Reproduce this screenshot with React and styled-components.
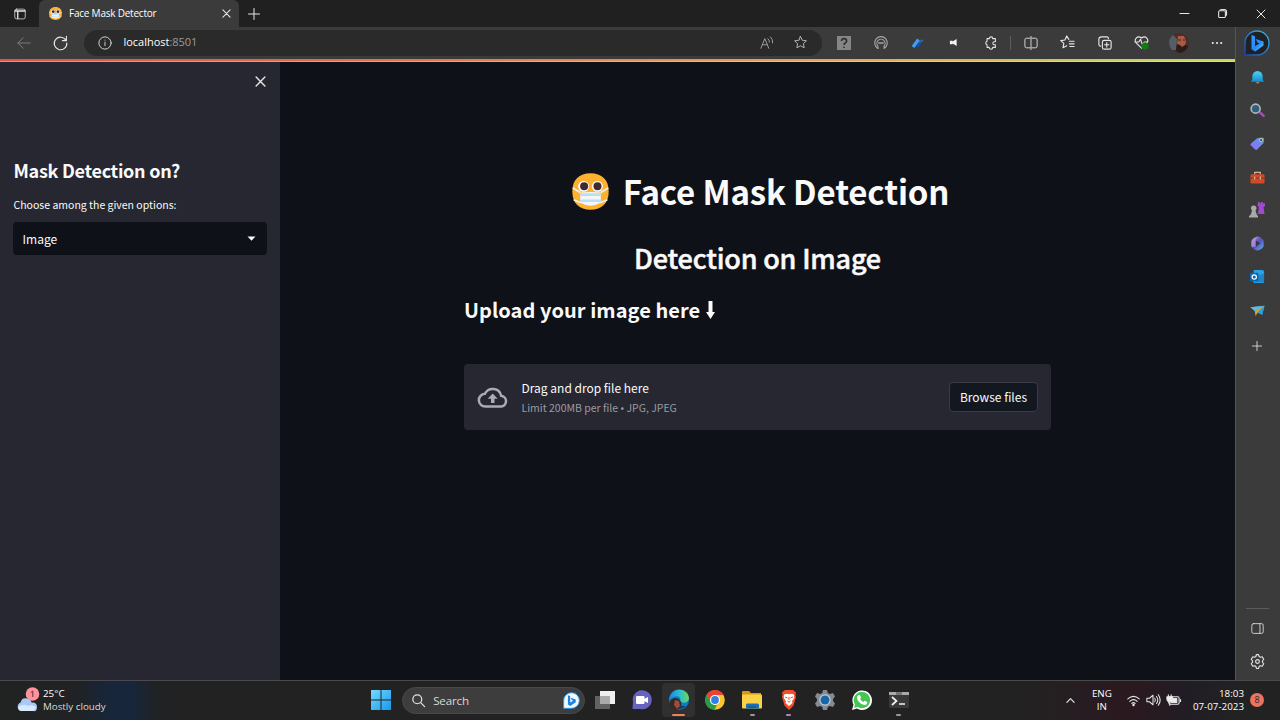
import React from "react";
import styled, { createGlobalStyle } from "styled-components";

const Global = createGlobalStyle`
  * { box-sizing: border-box; }
  html, body { margin: 0; padding: 0; background: #0e1117; }
  svg { display: block; flex: none; overflow: visible; }
`;

const ui = `"Open Sans", "Noto Sans", sans-serif`;
const source = `"Noto Sans CJK JP", "Noto Sans", sans-serif`;

const Screen = styled.div`
  width: 1280px; height: 720px; overflow: hidden;
  display: flex; flex-direction: column;
  font-family: ${ui}; color: #fff;
`;
const TitleBar = styled.header`
  height: 27px; flex: none; background: #202020;
  display: flex; align-items: stretch;
`;
const TabActions = styled.div`
  width: 39px; display: flex; align-items: center; justify-content: center;
`;
const Tab = styled.div`
  width: 200px; background: #3b3b3b; border-radius: 6px 6px 0 0;
  display: flex; align-items: center; padding: 0 8px 0 10px;
`;
const TabTitle = styled.span`
  flex: 1; margin-left: 7px; font-size: 10px; line-height: 14px; white-space: nowrap;
  letter-spacing: -0.22px; padding-bottom: 1px;
`;
const NewTab = styled.div`
  width: 30px; display: flex; align-items: center; justify-content: center;
`;
const WindowButtons = styled.div`
  margin-left: auto; display: flex;
`;
const WindowButton = styled.div`
  width: 38.4px; display: flex; align-items: center; justify-content: center;
`;
const Browser = styled.div`
  flex: 1; min-height: 0; display: flex; background: #3b3b3b;
`;
const Pane = styled.div`
  width: 1235px; flex: none; display: flex; flex-direction: column;
`;
const Toolbar = styled.div`
  height: 32px; flex: none; display: flex; align-items: center; padding-bottom: 1px;
`;
const NavButton = styled.div`
  width: 37px; flex: none; display: flex; justify-content: center; align-items: center;
  &:first-child { margin-left: 5px; }
`;
const AddressBar = styled.div`
  width: 738px; flex: none; height: 26px; border-radius: 13px; background: #2a2a2a;
  margin-left: 4.5px; padding-left: 14px; display: flex; align-items: center;
`;
const Url = styled.div`
  flex: 1; margin-left: 12px; font-size: 11px; line-height: 16px; letter-spacing: -0.02px; padding-bottom: 1px;
  span { color: #9b9b9b; }
`;
const BarSlot = styled.div`
  width: ${p => p.$w || 36.7}px; display: flex; justify-content: center; align-items: center; flex: none;
`;
const Extensions = styled.div`
  display: flex; align-items: center; margin-left: 4px;
`;
const Separator = styled.div`
  width: 1px; height: 14px; background: #5c5c5c; margin: 0 2px 0 1px;
`;
const ProgressLine = styled.div`
  height: 3px; flex: none;
  background: linear-gradient(90deg, #dc544c, #e0704f 30%, #e0a35c 65%, #d9b45c 78%, #c8c966 90%, #c9d65c);
  border-bottom: 1px solid rgba(255, 255, 200, 0.35);
`;
const AppArea = styled.div`
  flex: 1; display: flex; background: #0e1117; font-family: ${source}; color: #fafafa;
`;
const AppSidebar = styled.aside`
  width: 280px; background: #262730; padding: 0 13px;
`;
const CloseRow = styled.div`
  height: 38px; display: flex; justify-content: flex-end; align-items: center; padding-right: 1px;
`;
const SidebarTitle = styled.h2`
  margin: 57px 0 0 0.5px; font-size: 18px; line-height: 26px; font-weight: 700; white-space: nowrap;
  letter-spacing: -0.28px;
`;
const FieldLabel = styled.label`
  display: block; margin: 13px 0 0 0.5px; font-size: 10.5px; line-height: 18px; white-space: nowrap;
`;
const Select = styled.div`
  margin-top: 8px; height: 33px; border-radius: 4px; background: #0e1117;
  display: flex; align-items: center; justify-content: space-between; padding: 0 11px 0 9.5px;
  font-size: 12px; line-height: 18px;
`;
const Main = styled.main`
  flex: 1; display: flex; justify-content: center;
`;
const Block = styled.section`
  width: 587px; padding-top: 101px;
`;
const PageTitle = styled.h1`
  margin: 0; height: 56px; display: flex; justify-content: center; align-items: center;
  gap: 14px; padding-left: 6px; font-size: 33px; line-height: 44px; font-weight: 700; white-space: nowrap;
  letter-spacing: -0.14px;
`;
const PageSubtitle = styled.h2`
  margin: 17px 0 0; text-align: center; font-size: 27px; line-height: 44px;
  font-weight: 500; white-space: nowrap; letter-spacing: -0.19px; -webkit-text-stroke: 0.5px #fafafa;
`;
const UploadTitle = styled.h3`
  margin: 15px 0 0; font-size: 20px; line-height: 30px; font-weight: 700; white-space: nowrap;
  display: flex; align-items: center; gap: 6px; letter-spacing: 0.06px;
`;
const Dropzone = styled.div`
  margin-top: 39px; height: 66px; border-radius: 4px; background: #262730;
  display: flex; align-items: center; padding: 0 13px;
`;
const DropText = styled.div`
  flex: 1; margin-left: 13.5px; font-size: 12px; line-height: 21px; white-space: nowrap;
`;
const DropLimit = styled.div`
  font-size: 10.5px; line-height: 20px; color: #9a9ba2;
`;
const BrowseButton = styled.button`
  width: 89px; height: 30px; padding: 0; border: 1px solid #3a3b43; border-radius: 4px;
  background: #131720; color: #fafafa; font: 12px/18px ${source}; white-space: nowrap;
`;
const EdgeRail = styled.nav`
  width: 45px; border-left: 1px solid #555; background: #3b3b3b; padding: 0 2px 2px 0;
  display: flex; flex-direction: column; align-items: center;
`;
const RailSlot = styled.div`
  height: 33.3px; flex: none; display: flex; align-items: center; justify-content: center;
  &:first-child { height: 33.5px; padding-bottom: 2px; }
`;
const RailAdd = styled(RailSlot)`
  margin-top: 2.5px;
`;
const RailDivider = styled.div`
  width: 23px; height: 1px; background: #5c5c5c; margin: auto 0 2px;
`;
const Taskbar = styled.footer`
  height: 40px; flex: none; border-top: 1px solid #4a4a4c; display: flex; align-items: center;
  padding-bottom: 1px;
  background: linear-gradient(90deg, #222 0, #202224 75px, #17263a 110px, #17263a 132px, #202224 155px, #222 180px,
    #222 1020px, #281b21 1100px, #2b191e 1125px, #211d25 1190px, #222 1240px);
`;
const Weather = styled.div`
  width: 363px; flex: none; padding-left: 16px; display: flex; align-items: center; gap: 5px;
`;
const Stack = styled.div`
  font-size: 9.8px; line-height: 13.4px; white-space: nowrap;
  text-align: ${p => p.$align || "left"};
  div + div { color: ${p => p.$second || "#fff"}; }
`;
const Language = styled(Stack)`
  margin-left: 17px;
`;
const TaskSlot = styled.div`
  width: 36.65px; height: 36px; flex: none; display: flex; align-items: center; justify-content: center;
  position: relative;
`;
const ActiveTile = styled.div`
  width: 33px; height: 34px; border-radius: 4px; background: #303030;
  display: flex; align-items: center; justify-content: center;
`;
const Running = styled.i`
  position: absolute; bottom: 2px; height: 2.5px; border-radius: 2px;
  width: ${p => p.$w || 5}px; background: ${p => p.$color || "#999"};
`;
const SearchBox = styled.div`
  width: 183px; flex: none; height: 27px; border-radius: 14px; background: #3d3d3d; border: 1px solid #484848;
  margin: 0 2px 0 2.5px; display: flex; align-items: center; padding: 0 4px 0 9px;
  font-size: 11.6px; color: #d8d8d8;
  span { flex: 1; margin-left: 8px; letter-spacing: -0.15px; }
`;
const Tray = styled.div`
  margin-left: auto; display: flex; align-items: center; padding-right: 16px;
`;
const TrayIcons = styled.div`
  display: flex; align-items: center; gap: 6px; margin: 0 12px 0 15px;
`;
const Notification = styled.div`
  width: 14px; height: 14px; margin-left: 6px; border-radius: 50%; background: #ed7361;
  color: #37201d; font-size: 9px; line-height: 14px; text-align: center;
`;

const Line = ({ w = 16, h, vb = "0 0 16 16", c = "#e6e6e6", sw = 1, children }) => (
  <svg width={w} height={h || w} viewBox={vb} fill="none" stroke={c} strokeWidth={sw} strokeLinecap="round" strokeLinejoin="round">{children}</svg>
);
const Cross = ({ size, sw = 1 }) => <Line w={size} vb="0 0 10 10" sw={sw}><path d="M1 1 9 9M9 1 1 9" /></Line>;
const Plus = ({ size }) => <Line w={size} vb="0 0 12 12"><path d="M6 .5v11M.5 6h11" /></Line>;

const MaskFace = ({ size }) => (
  <svg width={size} height={size} viewBox="0 0 36 36">
    <path d="M18 .3C29 .3 35.7 6.500 35.7 18S29 35.700 18 35.700 .3 29.500 .3 18 7 .3 18 .3Z" fill="#ffb02e" />
    <path d="M.8 14.500 8 19M35.200 14.500 28 19M1.600 26l7 3M34.400 26l-7 3" stroke="#edf2f8" strokeWidth="1.700" />
    <circle cx="11.3" cy="13" r="5.3" fill="#fff" /><circle cx="24.7" cy="13" r="5.3" fill="#fff" />
    <circle cx="11.8" cy="13" r="3.9" fill="#402a32" /><circle cx="24.8" cy="13" r="3.9" fill="#402a32" />
    <path d="M8 19q10-.8 20 0v10q-10 5.500-20 0Z" fill="#f3f7fc" />
    <path d="M8 21h20M8 27h20" stroke="#b7dff7" strokeWidth="2.600" />
  </svg>
);
const BingMark = () => <path d="m7.500 5 3.500 1.300v9.700l4.500-2.500-2.200-1.100-1.400-3.500 7.600 2.700v4L11.200 21.500 7.500 19.300Z" />;
const BingButton = () => (
  <svg width="26" height="26" viewBox="0 0 26 26">
    <defs>
      <linearGradient id="bing-ring" x1="0" y1="1" x2="1" y2="0"><stop stopColor="#1745bd" /><stop offset="1" stopColor="#38b9df" /></linearGradient>
      <linearGradient id="bing-b" x1="0" y1="0" x2="1" y2="1"><stop stopColor="#3996ff" /><stop offset=".55" stopColor="#2587fb" /><stop offset="1" stopColor="#61dcef" /></linearGradient>
    </defs>
    <path d="M1 25V13A12 12 0 1 1 13 25Z" fill="#202124" stroke="url(#bing-ring)" strokeWidth="1.3" />
    <g fill="url(#bing-b)"><BingMark /></g>
  </svg>
);
const Star = () => <path d="m8 1.6 1.9 4 4.4.6-3.2 3 .8 4.4L8 11.5l-3.9 2.1.8-4.4-3.2-3 4.4-.6Z" />;

const AddressIcons = () => (
  <>
    <BarSlot $w={33}><Line w={14} c="#aaa"><path d="M1 14 5.5 3 10 14M2.8 10h5.4M9 3q2 1.5 1.8 4M12 1q3.2 3 2.5 7" /></Line></BarSlot>
    <BarSlot $w={33}><Line w={15} c="#bbb"><Star /></Line></BarSlot>
    <BarSlot $w={5} />
  </>
);

const ToolIcons = () => (
  <Extensions>
    <BarSlot><svg width="14" height="14" viewBox="0 0 14 14"><path fill="#858585" d="M0 0h14v14H0z" /><path d="M4.5 5Q4.5 2.700 7 2.700T9.600 5Q9.600 6.200 8.300 7T7 9.100M7 10.700v1.200" fill="none" stroke="#303030" strokeWidth="1.7" /></svg></BarSlot>
    <BarSlot><Line w={14} c="#a8a8a8" sw={1.2}><path d="M4.500 14.200A7.200 7.200 0 1 1 11.500 14.200V12" /><path d="M4.500 14.200V11.500A4.700 4.700 0 1 1 11.500 11.500" /><path d="M5.500 8h1.200M7.600 8h1M9.500 8h1" strokeWidth="1.600" /></Line></BarSlot>
    <BarSlot><svg width="14" height="14" viewBox="0 0 14 14"><path d="M3 11 8.500 3.500" stroke="#3ca0f4" strokeWidth="3.400" /><path d="m7 11 3-4" stroke="#174cae" strokeWidth="2.600" /><path d="m9 6.500 4-2.500" stroke="#2468cc" strokeWidth="2" /></svg></BarSlot>
    <BarSlot><svg width="9" height="9" viewBox="0 0 10 10"><path d="M1 3h3v4H1zM4 3.800 8.500 1v8L4 6.200Z" fill="#f2f2f2" /></svg></BarSlot>
    <BarSlot><Line w={14} sw={1.2}><path d="M3.500 3H6a2 2 0 0 1 4 0h3v3.500h-1.200a1.700 1.700 0 0 0 0 3.400H13V13h-3a2 2 0 0 1-4 0H3.500v-3a2.100 2.100 0 0 1 0-4V3Z" /></Line></BarSlot>
    <Separator />
    <BarSlot><Line w={14}><path d="M7 2.500H3q-2 0-2 2v7q0 2 2 2h4M9 2.500h4q2 0 2 2v7q0 2-2 2H9M8 .5v15" /></Line></BarSlot>
    <BarSlot><Line w={15} sw={1.2}><path d="M9.4 4.7 7.2 1 5.2 5.3.8 6l3.3 3-.9 4.5 4-2.1M10 6.7h5M10 9.5h5M10.5 12.3H15" /></Line></BarSlot>
    <BarSlot><Line w={14} sw={1.3}><rect x="5" y="5" width="10" height="10" rx="2" /><path d="M3 11.5A2 2 0 0 1 1 9.5V4a3 3 0 0 1 3-3h6a2 2 0 0 1 2 2M10 7.5v5M7.5 10h5" /></Line></BarSlot>
    <BarSlot><Line w={15} sw={1.2}><path d="M8 14 2.5 8.6C-.7 5 3.5-.3 8 3.2c4.5-3.5 8.7 1.8 5.5 5.4M1 7.5h4l2-3 2 6 2-3h3" /><circle cx="11.8" cy="11.8" r="3.8" fill="#107c10" stroke="none" /></Line></BarSlot>
    <BarSlot $w={39}><svg width="20" height="20" viewBox="0 0 20 20"><circle cx="10" cy="10" r="10" fill="#4c2d25" /><path d="M3 17A10 10 0 0 1 4 2l4 4-1 11Z" fill="#555d66" /><path d="m9 3 6 0 2 5-1 5-4 3-4-5Z" fill="#a85b42" /><path d="m8 11 3 1 2 2 3-2 3 1q-2 6-8 7l-4-2Z" fill="#2b1b1a" /><path d="M9 7h3M14 7h2" stroke="#3a211d" strokeWidth="1.200" /></svg></BarSlot>
    <BarSlot $w={36}><svg width="12" height="4" viewBox="0 0 12 4" fill="#e9e9e9"><circle cx="1.800" cy="2" r="1.1" /><circle cx="6" cy="2" r="1.1" /><circle cx="10.200" cy="2" r="1.1" /></svg></BarSlot>
  </Extensions>
);

const Full = ({ children, size = 15 }) => <svg width={size} height={size} viewBox="0 0 16 16">{children}</svg>;
const Defs = () => (
  <defs>
    <linearGradient id="bell" x1="0" y1="0" x2="0" y2="1"><stop stopColor="#4fd3ef" /><stop offset="1" stopColor="#168bd5" /></linearGradient>
    <linearGradient id="tag" x1="0" y1="1" x2="1" y2="0"><stop stopColor="#966bff" /><stop offset="1" stopColor="#539de9" /></linearGradient>
    <linearGradient id="m365" x1="0" y1="0" x2="1" y2="1"><stop stopColor="#bd87df" /><stop offset=".5" stopColor="#5451b9" /><stop offset="1" stopColor="#63b7f5" /></linearGradient>
  </defs>
);
const railIcons = [
  <Full><Defs /><path d="M2.500 6.500a5.500 5.500 0 0 1 11 0V10l1.500 2.500H1L2.500 10Z" fill="url(#bell)" /><path d="M6 13h4q-1 3-4 0Z" fill="#c8a16d" /></Full>,
  <Full><path d="m11 10.500 3.500 3" stroke="#a948bd" strokeWidth="2.800" strokeLinecap="round" /><circle cx="6" cy="6" r="4.800" fill="#315e78" stroke="#b3b8bd" strokeWidth="1.700" /></Full>,
  <Full><path d="m1 8 7-6 5-.5 2 1-.5 5-7 7Q6 16 3 12L.5 9.500Z" fill="url(#tag)" /><circle cx="11.800" cy="4.300" r="1.600" fill="#25344a" stroke="#e3d379" /></Full>,
  <Full><path d="M5 5V2.500h6V5" fill="none" stroke="#cfb8aa" strokeWidth="1.200" /><rect x=".5" y="4.500" width="15" height="10" rx="1.500" fill="#ce4b26" /><path d="M.5 8.600h15" stroke="#842f1c" /><path d="M5 7v3M11 7v3" stroke="#ddd" /></Full>,
  <Full size={16}><path d="M9 0h1.800v1.300H12V0h1.700v1.300H16V4l-1.500 1 1 7H9l1-7-1.500-1Z" fill="#a249d2" /><path d="M5 3.500a2.600 2.600 0 0 1 2 4.200L6.500 9 8 13l1 1v1.500H0V14l1.500-1 1.500-4-.5-1.300A2.600 2.600 0 0 1 5 3.500Z" fill="#a8aaa7" /></Full>,
  <Full><path d="M8 .5q2 0 4 1.500 3 2 2.500 5v4q-1 2-3 3.200T8 15.500 4.500 14 1.500 11.500v-6Q2 3 4.500 2T8 .5Z" fill="url(#m365)" /><path d="m6 4.500 5 3.500-5 3.500Z" fill="#343745" /><path d="M1.500 5.500Q4 1 9 .6 6 2 6 6v5.500l-4.500 0Z" fill="#bc96dd" opacity=".7" /></Full>,
  <Full><path d="M4 1h9q2 0 2 2v11q0 1-2 1H5Q3.500 15 3.500 13Z" fill="#27a4e4" /><path d="M4 8 15 5v9H5Z" fill="#2284c6" /><rect y="4" width="9" height="9" rx="1" fill="#0867b3" /><circle cx="4.500" cy="8.500" r="2.300" fill="none" stroke="#fff" strokeWidth="1.300" /></Full>,
  <Full><path d="M.5 4.500 15.500 3 13 12.500 7.500 10Z" fill="#36a4df" /><path d="M.5 4.500 15.500 3 5 8.500Z" fill="#65b9dc" /><path d="m5 8.500 1 5.500 2-3.500L15.500 3Z" fill="#d5a231" /><path d="m8 10 7.500-7L13 12.500Z" fill="#319cd7" /></Full>,
];

const Gear = () => (
  <Line w={15} sw={1.2}><path d="m6.600 1 .3-.3h2.200l.6 2 1.300.7 2-.5 1.700 2.700-1.400 1.600v1.600l1.400 1.600-1.700 2.700-2-.5-1.300.8-.6 2H6.900l-.6-2-1.300-.8-2 .5-1.700-2.700 1.400-1.600V7.200L1.300 5.600 3 2.900l2 .5 1.300-.7Z" /><circle cx="8" cy="8" r="2" /></Line>
);

const Icon20 = ({ children }) => <svg width="20" height="20" viewBox="0 0 20 20">{children}</svg>;
const TaskIcons = () => (
  <>
    <TaskSlot><Icon20><path d="M5 1h15v13H5Z" fill="#efefef" /><path d="M0 6h15v13H0Z" fill="#6d6d6d" opacity=".85" /><path d="M5 6h10v8H5Z" fill="#aaa" /></Icon20></TaskSlot>
    <TaskSlot><Icon20><path d="M.5 19 1 12a9.500 9.500 0 1 1 7 7Z" fill="#6763be" /><rect x="4" y="6" width="8.500" height="8" rx="1.200" fill="#fff" /><path d="m12 9 4-2v6l-4-2Z" fill="#fff" /></Icon20></TaskSlot>
    <TaskSlot><ActiveTile><Icon20>
      <defs><linearGradient id="edge"><stop stopColor="#1d85dc" /><stop offset=".5" stopColor="#29bad7" /><stop offset="1" stopColor="#6bd953" /></linearGradient></defs>
      <circle cx="10" cy="10" r="10" fill="#087ec7" /><path d="M0 10C1-4 19-3 20 8c0 5-7 6-9 3 2-5-5-7-11-1Z" fill="url(#edge)" /><path d="M8 9q-1 8 9 7-6 6-12 1Z" fill="#123f7a" /><circle cx="6.300" cy="14" r="6" fill="#382723" /><path d="m6 10 4 1 1 5-3 3-3-4Z" fill="#98503d" />
    </Icon20></ActiveTile><Running $w={13} $color="#ed815d" /></TaskSlot>
    <TaskSlot><Icon20><circle cx="10" cy="10" r="9.800" fill="#fac62b" /><path d="M1.500 5A9.800 9.800 0 0 1 18.600 5H10a5 5 0 0 0-4.400 7.400Z" fill="#e94335" /><path d="M1.500 5 6 12.500A5 5 0 0 0 12 14.500L9.500 19.800A9.800 9.800 0 0 1 1.500 5Z" fill="#269c4b" /><circle cx="10" cy="10" r="5" fill="#fff" /><circle cx="10" cy="10" r="3.900" fill="#317ee8" /></Icon20></TaskSlot>
    <TaskSlot><Icon20><path d="M0 2q0-1 1-1h6l2 2h10v4H0Z" fill="#d99715" /><rect y="4.500" width="20" height="14" rx="1" fill="#fbd246" /><path d="M4 18.500V15q0-1.500 1.500-1.500h10q1.500 0 1.500 1.500v3.500Z" fill="#1670b8" /><path d="M7 17h7" stroke="#0a4f87" /></Icon20><Running /></TaskSlot>
    <TaskSlot><Icon20><path d="m6 0h8l3 2.500-.5 2.500.5 2-2.500 8.500L10 20l-4.500-4.500L3 7l.5-2L3 2.500Z" fill="#f44d27" /><path d="m5 4.500 3-.8 2 .6 2-.6 3 .8.300 3-1.300 2.500-1 1 .5 2L10 16l-3.500-3 .5-2-1-1L4.700 7.500Z" fill="#fff" /><path d="m6 7 2.500 1M14 7l-2.500 1M10 7v3M8.500 11l1.500 1.200 1.500-1.200" fill="none" stroke="#f44d27" /></Icon20><Running $color="#b189b4" /></TaskSlot>
    <TaskSlot><Icon20><path d="M8 0h4l.8 3 2 .9L18 3l2 3.500-2 2.500v2l2 2.500-2 3.500-3.200-.9-2 .9-.8 3H8l-.8-3-2-.9L2 17l-2-3.500L2 11V9L0 6.500 2 3l3.200.900 2-.900Z" fill="#858b93" /><circle cx="10" cy="10" r="5.700" fill="#c8d0d9" /><circle cx="10" cy="10" r="4.500" fill="#1767a8" /></Icon20></TaskSlot>
    <TaskSlot><Icon20><path d="m0 20 1.500-5.200A9.800 9.800 0 1 1 5 18.600Z" fill="#fff" /><path d="m2 18 1-3.500A8.200 8.200 0 1 1 5.500 17Z" fill="#44c655" /><path d="m6.200 5.300 1.700-.3 1.200 2.700-1 1.300q1 2.200 3.300 3l1.200-1.300 2.700 1.200q.2 2.800-2.800 3.200Q5.600 13.200 5 7.800 5 6.200 6.200 5.300Z" fill="#fff" /></Icon20></TaskSlot>
    <TaskSlot><Icon20><rect y="2" width="20" height="16" rx="1" fill="#393939" /><path d="M0 2h20v3H0Z" fill="#aaa" /><path d="M7 2h6v3H7Z" fill="#777" /><path d="m3 7 4.500 4L3 15M10 14h6" fill="none" stroke="#f2f2f2" strokeWidth="1.700" /></Icon20><Running /></TaskSlot>
  </>
);

export default function App() {
  return (
    <Screen>
      <Global />
      <TitleBar>
        <TabActions><Line w={12}><rect x="1" y="1.500" width="14" height="13" rx="2.500" /><path d="M1.500 4h13M5 4v10" strokeWidth="1.800" /></Line></TabActions>
        <Tab><MaskFace size={13} /><TabTitle>Face Mask Detector</TabTitle><Cross size={9} sw={1.200} /></Tab>
        <NewTab><Plus size={12} /></NewTab>
        <WindowButtons>
          <WindowButton><Line w={9} vb="0 0 9 9"><path d="M0 4.500h9" /></Line></WindowButton>
          <WindowButton><Line w={9} vb="0 0 10 10" sw={1.200}><rect x=".7" y="2" width="7.500" height="7.500" rx="1.200" /><path d="M2.500 1Q3 .5 4 .5h3q2.500 0 2.500 2.500v3q0 1-1 1.500" /></Line></WindowButton>
          <WindowButton><Cross size={10} /></WindowButton>
        </WindowButtons>
      </TitleBar>
      <Browser>
        <Pane>
          <Toolbar>
            <NavButton><Line w={14} c="#858585"><path d="M15 8H1M7 2 1 8l6 6" /></Line></NavButton>
            <NavButton><Line w={15} sw={1.200}><path d="M14 6A6.700 6.700 0 1 0 14.700 8.500M14.300 1.500V6H10" /></Line></NavButton>
            <AddressBar>
              <Line w={14}><circle cx="8" cy="8" r="7" /><path d="M8 7v4M8 4.700v.1" /></Line>
              <Url>localhost<span>:8501</span></Url>
              <AddressIcons />
            </AddressBar>
            <ToolIcons />
          </Toolbar>
          <ProgressLine />
          <AppArea>
            <AppSidebar>
              <CloseRow><Cross size={11} sw={1.300} /></CloseRow>
              <SidebarTitle>Mask Detection on?</SidebarTitle>
              <FieldLabel>Choose among the given options:</FieldLabel>
              <Select>Image<svg width="9" height="5" viewBox="0 0 9 5"><path d="M.5.5h8l-4 4.200Z" fill="#fafafa" /></svg></Select>
            </AppSidebar>
            <Main>
              <Block>
                <PageTitle><MaskFace size={37} /><span>Face Mask Detection</span></PageTitle>
                <PageSubtitle>Detection on Image</PageSubtitle>
                <UploadTitle><span>Upload your image here</span><svg width="9" height="18" viewBox="0 0 9 18"><path d="M2.500 0h4v11H9l-4.500 7L0 11h2.500Z" fill="#fafafa" /></svg></UploadTitle>
                <Dropzone>
                  <svg width="31" height="21" viewBox="0 0 31 21"><path d="M8.500 19.500a6.300 6.300 0 0 1-.6-12.700 8.700 8.700 0 0 1 16.300 2A5.400 5.400 0 0 1 24.500 19.500Z" fill="none" stroke="#a9abb7" strokeWidth="2.500" /><path d="m15.700 6.500 5 5.200h-3.200V16H14v-4.300h-3.300Z" fill="#a9abb7" /></svg>
                  <DropText>Drag and drop file here<DropLimit>Limit 200MB per file • JPG, JPEG</DropLimit></DropText>
                  <BrowseButton>Browse files</BrowseButton>
                </Dropzone>
              </Block>
            </Main>
          </AppArea>
        </Pane>
        <EdgeRail>
          <RailSlot><BingButton /></RailSlot>
          {railIcons.map((icon, i) => <RailSlot key={i}>{icon}</RailSlot>)}
          <RailAdd><Plus size={10} /></RailAdd>
          <RailDivider />
          <RailSlot><Line w={13}><rect x="1" y="2" width="14" height="12" rx="2" /><path d="M11 2v12" /></Line></RailSlot>
          <RailSlot><Gear /></RailSlot>
        </EdgeRail>
      </Browser>
      <Taskbar>
        <Weather>
          <svg width="22" height="26" viewBox="0 0 22 26"><path d="M5 24a4.500 4.500 0 0 1-.5-8.500Q6 10 11 11.500q4 .5 4.500 4Q21 15 21 20t-4 4Z" fill="#a8c8f5" /><path d="M2 20q6-4 10-1 4-2 8 1-1 4-4 4H5q-3-1-3-4Z" fill="#d9e8fd" /><circle cx="16.500" cy="7" r="6.800" fill="#ff929b" /><path d="m14.800 5.500 2-1.500v6" fill="none" stroke="#6b2d38" /></svg>
          <Stack $second="#d8d8d8"><div>25°C</div><div>Mostly cloudy</div></Stack>
        </Weather>
        <TaskSlot><Icon20>
          <defs><linearGradient id="win" x1="0" y1="0" x2="1" y2="1"><stop stopColor="#74dbff" /><stop offset="1" stopColor="#1698ed" /></linearGradient></defs>
          <path d="M0 0h9.500v9.500H0ZM10.500 0H20v9.500h-9.500ZM0 10.500h9.500V20H0ZM10.500 10.500H20V20h-9.500Z" fill="url(#win)" />
        </Icon20></TaskSlot>
        <SearchBox>
          <Line w={13} sw={1.500}><circle cx="6.500" cy="6.500" r="5.500" /><path d="m11 11 4.500 4.500" /></Line>
          <span>Search</span>
          <svg width="17" height="17" viewBox="0 0 26 26"><path d="M1 25V13A12 12 0 1 1 13 25Z" fill="#f4faff" stroke="#2699e5" strokeWidth="1.500" /><g fill="#1785e5"><BingMark /></g></svg>
        </SearchBox>
        <TaskIcons />
        <Tray>
          <Line w={9} vb="0 0 10 10" sw={1.300}><path d="m1 7 4-4 4 4" /></Line>
          <Language $align="center"><div>ENG</div><div>IN</div></Language>
          <TrayIcons>
            <Line w={13} sw={1.400}><path d="M1 6q7-6 14 0M3.500 9q4.500-4 9 0M6 11.500q2-2 4 0" /><circle cx="8" cy="13.500" r=".8" fill="#fff" /></Line>
            <Line w={14} sw={1.200}><path d="M1 6h3l4-3.500v11L4 10H1ZM10 6q1.500 2 0 4M12 4q3 4 0 8M14 2q4.500 6 0 12" /></Line>
            <Line w={15} sw={1.200}><rect x="3" y="4" width="11" height="8" rx="1.500" /><path d="M5.500 6h6v4h-6ZM15.500 7v2" fill="#eee" /><path d="M2.500 2v2M5.500 2v2M1 4h6v2.500a3 3 0 0 1-6 0ZM4 9.500V13" fill="#eee" /></Line>
          </TrayIcons>
          <Stack $align="right"><div>18:03</div><div>07-07-2023</div></Stack>
          <Notification>8</Notification>
        </Tray>
      </Taskbar>
    </Screen>
  );
}
